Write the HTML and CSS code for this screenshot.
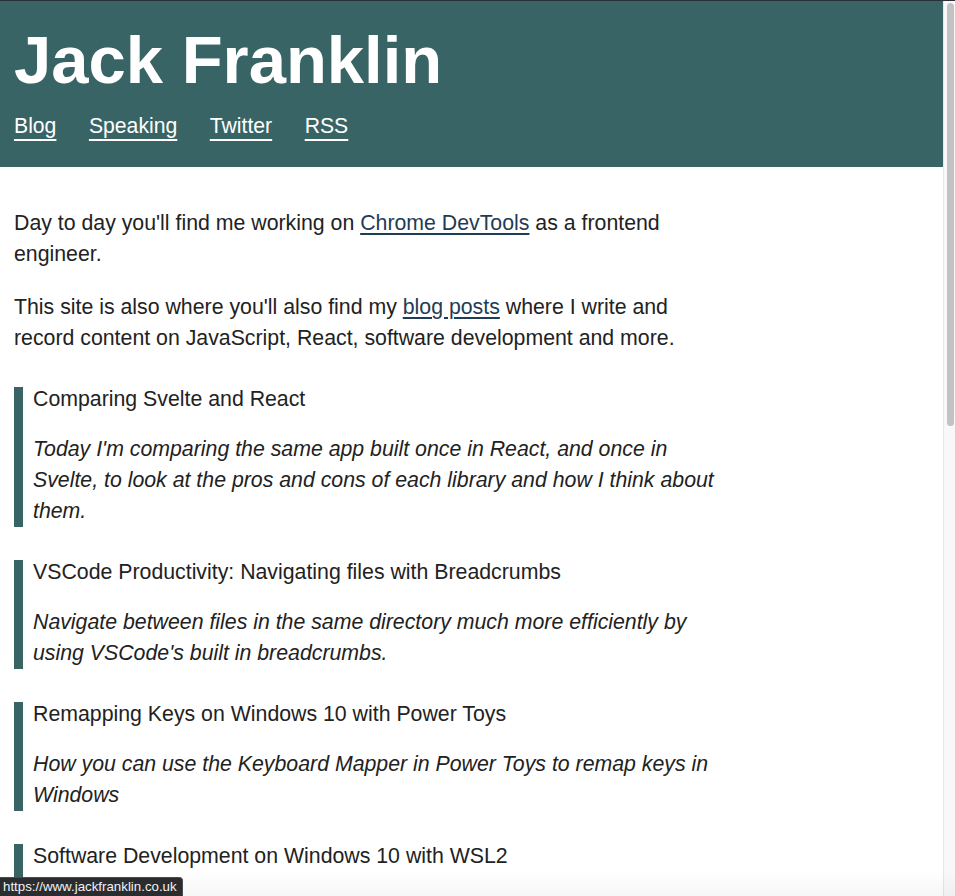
FILE: index.html
```html
<!DOCTYPE html>
<html lang="en">
<head>
<meta charset="utf-8">
<title>Jack Franklin</title>
<link rel="stylesheet" href="styles.css">
</head>
<body>
<header class="site-header">
  <h1 class="site-title">Jack Franklin</h1>
  <nav class="site-nav">
    <a href="#">Blog</a>
    <a href="#">Speaking</a>
    <a href="#">Twitter</a>
    <a href="#">RSS</a>
  </nav>
</header>
<main class="content">
  <div class="intro">
    <p>Day to day you'll find me working on <a class="text-link" href="#">Chrome DevTools</a> as a frontend engineer.</p>
    <p>This site is also where you'll also find my <a class="text-link" href="#">blog posts</a> where I write and record content on JavaScript, React, software development and more.</p>
  </div>
  <ul class="posts">
    <li class="post">
      <h2 class="post-title"><a href="#">Comparing Svelte and React</a></h2>
      <p class="post-summary">Today I'm comparing the same app built once in React, and once in Svelte, to look at the pros and cons of each library and how I think about them.</p>
    </li>
    <li class="post">
      <h2 class="post-title"><a href="#">VSCode Productivity: Navigating files with Breadcrumbs</a></h2>
      <p class="post-summary">Navigate between files in the same directory much more efficiently by using VSCode's built in breadcrumbs.</p>
    </li>
    <li class="post">
      <h2 class="post-title"><a href="#">Remapping Keys on Windows 10 with Power Toys</a></h2>
      <p class="post-summary">How you can use the Keyboard Mapper in Power Toys to remap keys in Windows</p>
    </li>
    <li class="post">
      <h2 class="post-title"><a href="#">Software Development on Windows 10 with WSL2</a></h2>
      <p class="post-summary">How I set up my Windows machine for web development using the Windows Subsystem for Linux.</p>
    </li>
  </ul>
</main>
<div class="scrollbar"><div class="scrollbar-thumb"></div></div>
<div class="bottom-shade"></div>
<div class="status-url">https://www.jackfranklin.co.uk</div>
</body>
</html>
```

FILE: styles.css
```css
html, body {
  margin: 0;
  padding: 0;
  overflow: hidden;
  height: 100%;
  background: #ffffff;
}

body {
  font-family: "Liberation Sans", Arial, Helvetica, sans-serif;
  font-size: 21.3px;
  line-height: 31px;
  color: #222222;
}

.site-header {
  background: #386466;
  border-top: 1px solid #2c3038;
  padding: 20px 14px 29px;
  color: #ffffff;
}

.site-title {
  margin: 0;
  font-size: 67px;
  line-height: 77px;
  font-weight: bold;
  letter-spacing: 0;
}

.site-nav {
  margin-top: 16px;
  line-height: 24px;
  font-size: 21.2px;
  display: flex;
  gap: 32.5px;
}

.site-nav a {
  color: #ffffff;
  text-decoration: underline;
  text-decoration-thickness: 2px;
  text-underline-offset: 6px;
}

.content {
  padding: 41px 14px 40px;
  max-width: 708px;
}

.intro p {
  margin: 0;
}

.intro p + p {
  margin-top: 22px;
}

.text-link {
  color: #1f3c55;
  text-decoration: underline;
  text-decoration-color: #1f3c55;
  text-decoration-thickness: 2px;
  text-underline-offset: 3px;
}

.posts {
  list-style: none;
  margin: 33px 0 0;
  padding: 0;
  display: flex;
  flex-direction: column;
  gap: 33px;
}

.post {
  border-left: 9px solid #386466;
  padding: 0 0 0 10px;
}

.post-title {
  margin: 0;
  font-size: 21.3px;
  line-height: 24px;
  font-weight: normal;
}

.post-title a {
  color: #222222;
  text-decoration: none;
}

.post-summary {
  margin: 23px 0 0;
  font-style: italic;
}

.scrollbar {
  position: fixed;
  top: 1px;
  right: 0;
  bottom: 0;
  width: 11px;
  background: #f8f8f8;
  border-left: 1px solid #e6e6e6;
}

.scrollbar-thumb {
  position: absolute;
  top: 2px;
  left: 3px;
  width: 7px;
  height: 423px;
  border-radius: 4px;
  background: #c2c2c2;
}

.bottom-shade {
  position: fixed;
  left: 0;
  right: 0;
  bottom: 0;
  height: 24px;
  background: linear-gradient(to bottom, rgba(0, 0, 0, 0), rgba(0, 0, 0, 0.035));
  pointer-events: none;
}

.status-url {
  position: fixed;
  left: 0;
  bottom: 0;
  height: 18px;
  padding: 0 5px 0 3px;
  background: #2a2c30;
  color: #f2f2f2;
  font-size: 13.3px;
  line-height: 18px;
  border-top-right-radius: 4px;
  border: 1px solid #4a4c50;
  border-left: none;
  border-bottom: none;
}
```
